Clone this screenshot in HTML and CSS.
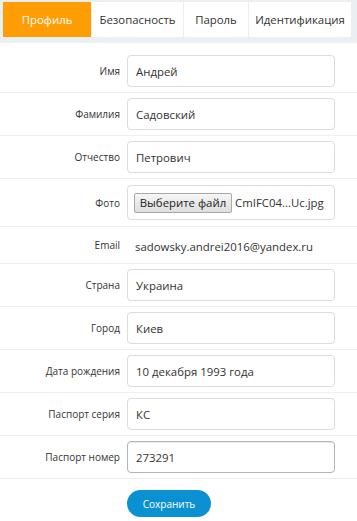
FILE: index.html
```html
<!DOCTYPE html>
<html lang="ru">
<head>
<meta charset="utf-8">
<link rel="stylesheet" href="styles.css">
</head>
<body>
<div class="tabs">
  <div class="tab active">Профиль</div>
  <div class="tab">Безопасность</div>
  <div class="tab">Пароль</div>
  <div class="tab">Идентификация</div>
</div>
<form class="form">
  <div class="row first"><label class="lbl">Имя</label><div class="field"><input class="inp" value="Андрей"></div></div>
  <div class="row"><label class="lbl">Фамилия</label><div class="field"><input class="inp" value="Садовский"></div></div>
  <div class="row"><label class="lbl">Отчество</label><div class="field"><input class="inp" value="Петрович"></div></div>
  <div class="row file-row"><label class="lbl">Фото</label><div class="field"><div class="filebox"><span class="filebtn">Выберите файл</span><span class="fname">CmIFC04...Uc.jpg</span></div></div></div>
  <div class="row text-row"><label class="lbl">Email</label><div class="field"><span class="val">sadowsky.andrei2016@yandex.ru</span></div></div>
  <div class="row"><label class="lbl">Страна</label><div class="field"><input class="inp" value="Украина"></div></div>
  <div class="row"><label class="lbl">Город</label><div class="field"><input class="inp" value="Киев"></div></div>
  <div class="row"><label class="lbl">Дата рождения</label><div class="field"><input class="inp" value="10 декабря 1993 года"></div></div>
  <div class="row"><label class="lbl">Паспорт серия</label><div class="field"><input class="inp" value="КС"></div></div>
  <div class="row"><label class="lbl">Паспорт номер</label><div class="field"><input class="inp focus" value="273291"></div></div>
  <div class="actions"><button type="button" class="save">Сохранить</button></div>
</form>
</body>
</html>
```
FILE: styles.css
```css
* { box-sizing: border-box; }
html, body { margin: 0; padding: 0; background: #fff; }
body {
  font-family: "Open Sans", "Liberation Sans", sans-serif;
  color: #333;
  width: 357px;
}
.tabs {
  display: flex;
  background: #eceff2;
  padding: 2px 6px 6px 3px;
  gap: 1px;
}
.tab {
  height: 35px;
  background: #fff;
  display: flex;
  align-items: center;
  justify-content: center;
  font-size: 11.4px;
  color: #333;
  white-space: nowrap;
}
.tab:nth-child(1) { width: 88px; }
.tab:nth-child(2) { width: 91px; }
.tab:nth-child(3) { width: 64px; }
.tab:nth-child(4) { flex: 1; }
.tab.active { background: #ff9e04; color: #fff; }
.form { padding-top: 7px; }
.row {
  display: flex;
  align-items: center;
  border-top: 1px solid #eceeef;
  padding: 5px 0 5px;
}
.row.first { border-top: none; }
.lbl {
  width: 120px;
  text-align: right;
  font-size: 10px;
  color: #333;
  flex-shrink: 0;
}
.field { margin-left: 7px; width: 208px; }
.inp {
  display: block;
  width: 208px;
  height: 32px;
  border: 1px solid #dcdcdc;
  border-radius: 4px;
  padding: 0 8px;
  font-family: "Open Sans", "Liberation Sans", sans-serif;
  font-size: 11.4px;
  color: #333;
  background: #fff;
  outline: none;
}
.inp.focus { border-color: #b4b4b4; box-shadow: inset 0 1px 1px rgba(0,0,0,0.08); }
.file-row { padding: 6px 0 6px; }
.filebox {
  height: 35px;
  border: 1px solid #dcdcdc;
  border-radius: 4px;
  display: flex;
  align-items: center;
  padding-left: 6px;
  font-size: 11.4px;
  white-space: nowrap;
}
.filebtn {
  height: 20px;
  width: 98px;
  display: flex;
  align-items: center;
  justify-content: center;
  border: 1px solid #a9a9a9;
  border-radius: 2px;
  background: linear-gradient(#f6f6f6, #dedede);
  font-size: 11.4px;
  color: #222;
  flex-shrink: 0;
}
.fname { margin-left: 3px; color: #333; }
.text-row { height: 37px; padding: 0; }
.val { font-size: 11.4px; padding-left: 8px; color: #333; }
.actions {
  border-top: 1px solid #eceeef;
  padding: 11px 0 0 127px;
}
.save {
  width: 84px;
  height: 27px;
  border: none;
  border-radius: 14px;
  background: #0b91d1;
  color: #fff;
  font-family: "Open Sans", "Liberation Sans", sans-serif;
  font-size: 10px;
  padding: 0;
}
```
